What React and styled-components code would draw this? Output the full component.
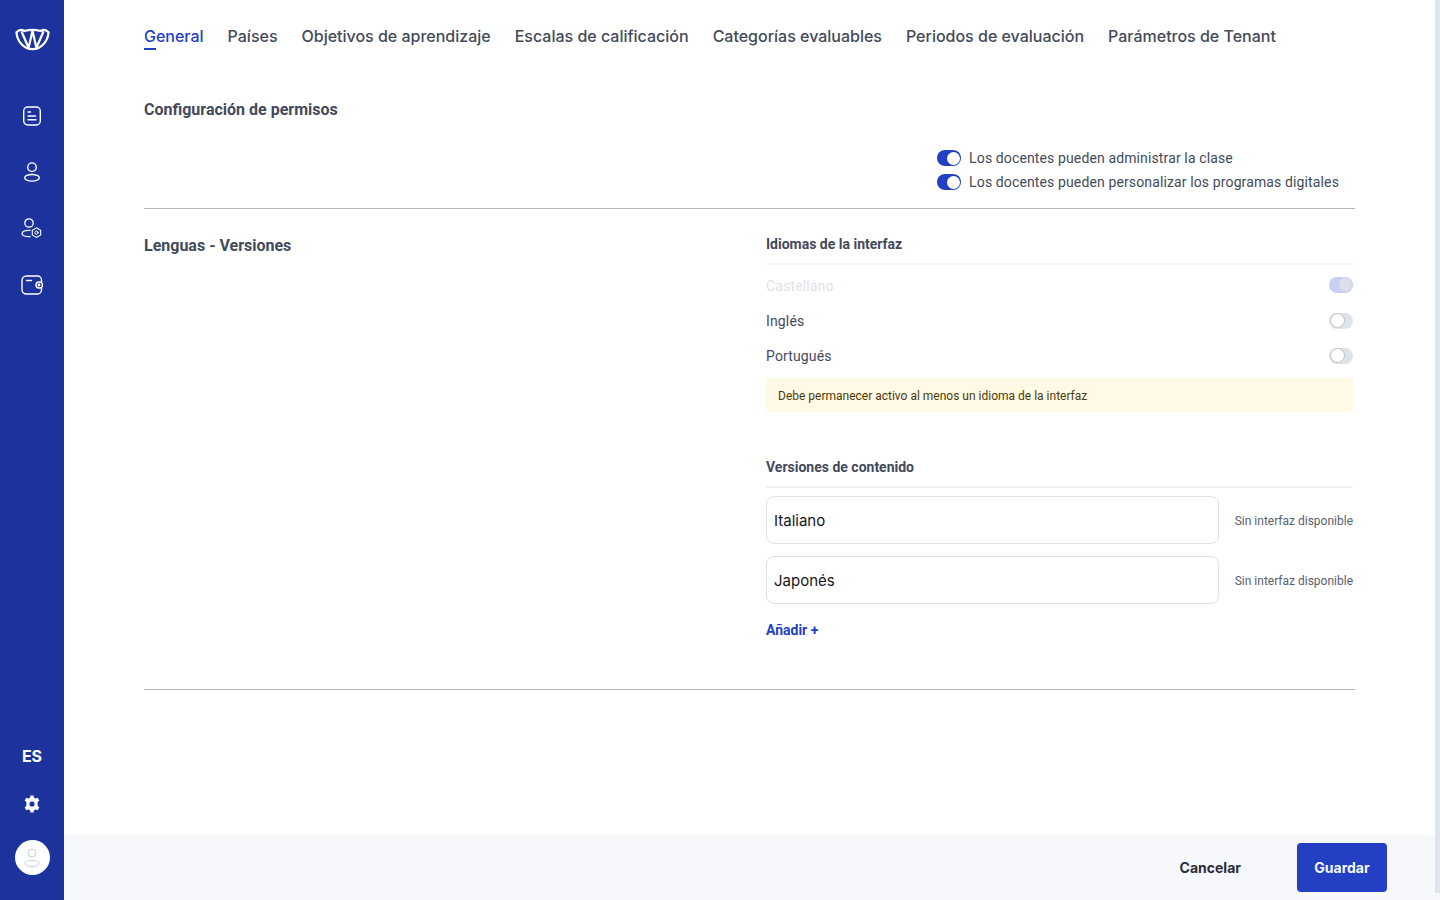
import React from "react";
import styled, { createGlobalStyle } from "styled-components";

const GlobalStyle = createGlobalStyle`
  html, body {
    margin: 0;
    height: 100%;
    overflow: hidden;
    background: #fff;
  }
  * {
    box-sizing: border-box;
  }
`;

const Page = styled.div`
  display: flex;
  width: 1440px;
  height: 900px;
`;

const Sidebar = styled.aside`
  width: 64px;
  height: 900px;
  flex-shrink: 0;
  background: #1c329c;
  display: flex;
  flex-direction: column;
  align-items: center;
  color: #fff;
`;

const LogoSlot = styled.div`
  height: 38px;
  margin-top: 20px;
  margin-bottom: 30px;
  padding-left: 1px;
  display: flex;
  align-items: center;
`;

const NavSlot = styled.div`
  height: 56.2px;
  display: flex;
  align-items: center;
  justify-content: center;
`;

const SidebarBottom = styled.div`
  margin-top: auto;
  padding-bottom: 25px;
  display: flex;
  flex-direction: column;
  align-items: center;
`;

const Lang = styled.div`
  font: 700 16px "Inter", sans-serif;
  line-height: 20px;
  margin-bottom: 29px;
`;

const Avatar = styled.div`
  width: 35px;
  height: 35px;
  margin-top: 27px;
  border-radius: 50%;
  background: #fff;
  display: flex;
  align-items: center;
  justify-content: center;
`;

const Main = styled.main`
  flex: 1;
  height: 900px;
  display: flex;
  flex-direction: column;
  position: relative;
`;

const Scrollbar = styled.div`
  position: absolute;
  top: 0;
  right: 0;
  width: 5px;
  height: 893px;
  background: #dfe5ef;
`;

const Content = styled.div`
  flex: 1;
  padding: 0 85px 0 80px;
`;

const Tabs = styled.nav`
  display: flex;
  gap: 24px;
  height: 73px;
  padding-top: 26px;
`;

const Tab = styled.a`
  font: 500 16px/20px "Inter", sans-serif;
  letter-spacing: -0.005px;
  color: ${props => (props.$active ? "#2340c5" : "#434a5b")};
  position: relative;
  white-space: nowrap;

  &::after {
    content: "";
    display: ${props => (props.$active ? "block" : "none")};
    position: absolute;
    left: 0;
    top: 22px;
    width: 12px;
    height: 2px;
    background: #2340c5;
  }
`;

const SectionTitle = styled.h2`
  margin: 0;
  font: 700 16px/20px "Roboto", sans-serif;
  color: #434a5b;
`;

const PermissionSection = styled.section`
  height: 136px;
  padding-top: 27px;
  border-bottom: 1px solid #b4b6bb;
  display: flex;
  flex-direction: column;
`;

const PermissionList = styled.div`
  margin-top: 28px;
  margin-left: auto;
  margin-right: 16px;
  display: flex;
  flex-direction: column;
  gap: 4px;
`;

const PermissionRow = styled.label`
  display: flex;
  align-items: center;
  gap: 8px;
  height: 20px;
  font: 400 14px/20px "Roboto", sans-serif;
  letter-spacing: 0.125px;
  color: #434a5b;
`;

const Toggle = styled.span`
  display: block;
  position: relative;
  width: 24px;
  height: 16px;
  border-radius: 8px;
  flex-shrink: 0;
  margin-top: ${props => (props.$disabled ? "-2px" : "0")};
  background: ${props => {
    if (props.$disabled) return "#c9cff2";
    return props.$on ? "#2340c5" : "#dfe3ea";
  }};

  &::after {
    content: "";
    position: absolute;
    top: 1.5px;
    left: ${props => (props.$on ? "9.5px" : "1.5px")};
    width: 13px;
    height: 13px;
    border-radius: 50%;
    background: ${props => (props.$disabled ? "#dde0ec" : "#fff")};
    box-shadow: ${props => (props.$on ? "none" : "0 0 0 1px #c5c8d2")};
  }
`;

const LanguageSection = styled.section`
  height: 481px;
  border-bottom: 1px solid #b4b6bb;
  display: flex;
  justify-content: space-between;
  padding-top: 27px;
`;

const Panel = styled.div`
  width: 587px;
  margin-right: 2px;
  margin-top: -2px;
`;

const PanelTitle = styled.h3`
  margin: 0;
  height: 31px;
  font: 700 14px/20px "Roboto", sans-serif;
  color: #434a5b;
  border-bottom: 2px solid #f1f3f8;
`;

const LanguageList = styled.div`
  padding-top: 3px;
`;

const LanguageRow = styled.div`
  height: 35px;
  display: flex;
  align-items: center;
  justify-content: space-between;
  font: 400 14px/20px "Roboto", sans-serif;
  letter-spacing: 0.15px;
  color: ${props => (props.$disabled ? "#dfe2e8" : "#434a5b")};
`;

const Notice = styled.div`
  height: 34px;
  margin-top: 5px;
  padding: 2px 12px 0;
  display: flex;
  align-items: center;
  background: #fff9e6;
  color: #4d3c08;
  font: 400 12px/16px "Roboto", sans-serif;
`;

const VersionsBlock = styled.div`
  margin-top: 45px;
`;

const VersionList = styled.div`
  margin-top: 8px;
  display: flex;
  flex-direction: column;
  gap: 12px;
`;

const VersionRow = styled.div`
  display: flex;
  align-items: center;
  justify-content: space-between;
`;

const VersionInput = styled.div`
  width: 453px;
  height: 48px;
  padding: 2px 7px 0;
  display: flex;
  align-items: center;
  border: 1px solid #dfe2e8;
  border-radius: 8px;
  font: 400 15px/20px "Inter", sans-serif;
  color: #14161c;
`;

const Hint = styled.span`
  padding-top: 2px;
  font: 400 12px/16px "Roboto", sans-serif;
  color: #5a6070;
`;

const AddLink = styled.a`
  display: block;
  margin-top: 18px;
  font: 700 14px/16px "Roboto", sans-serif;
  color: #2340c5;
`;

const Footer = styled.footer`
  height: 65px;
  background: #f7f8fc;
  display: flex;
  align-items: center;
  justify-content: flex-end;
  gap: 56px;
  padding: 0 53px 0 0;
`;

const CancelButton = styled.button`
  border: none;
  background: none;
  padding: 0;
  font: 700 14px/20px "Inter", sans-serif;
  color: #2b2e38;
`;

const SaveButton = styled.button`
  width: 90px;
  height: 49px;
  border: none;
  border-radius: 4px;
  background: #2340c5;
  color: #f4f6ff;
  font: 700 14px/20px "Inter", sans-serif;
`;

const LogoIcon = () => (
  <svg width="35" height="24" viewBox="0 0 36 24" fill="none" stroke="#fff" strokeWidth="2.300" strokeLinejoin="round" strokeLinecap="round">
    <path d="M1.500 5C4 2.500 7 2 9.500 3.800C14 2.600 22 2.600 26.500 3.800C29 2 32 2.500 34.500 5C34 14 27 22.500 18 22.500C9 22.500 2 14 1.500 5Z" />
    <path d="M7 5L14 21L18 3.500L22 21L29 5" />
  </svg>
);

const NoteIcon = () => (
  <svg width="20" height="20" viewBox="0 0 20 20" fill="none" stroke="#fff" strokeWidth="1.400" strokeLinecap="round">
    <rect x="1.700" y="1" width="16.600" height="18" rx="4" />
    <path d="M6 6H8.500M6 10H13.500M6 13.800H14" />
  </svg>
);

const UserIcon = () => (
  <svg width="18" height="20" viewBox="0 0 18 20" fill="none" stroke="#fff" strokeWidth="1.400">
    <circle cx="9" cy="5.200" r="4.300" />
    <ellipse cx="9" cy="15.800" rx="7.300" ry="3.300" />
  </svg>
);

const UserCogIcon = () => (
  <svg width="22" height="20" viewBox="0 0 22 20" fill="none" stroke="#fff" strokeWidth="1.300" strokeLinecap="round">
    <circle cx="8" cy="5" r="4.200" />
    <path d="M9 12.400C4.500 12 1 13.300 1 15.600C1 17.800 4.500 18.800 9 18.600" />
    <path d="M15.500 9.800L19.700 12.200V17L15.500 19.400L11.300 17V12.200Z" strokeWidth="1.100" />
    <circle cx="15.500" cy="14.600" r="1.600" strokeWidth="1" />
  </svg>
);

const WalletIcon = () => (
  <svg width="22" height="20" viewBox="0 0 22 20" fill="none" stroke="#fff" strokeWidth="1.400" strokeLinecap="round">
    <path d="M20.500 7V5C20.500 2.800 18.700 1 16.500 1H5.500C3 1 1 3 1 5.500V14.500C1 17 3 19 5.500 19H16.500C18.700 19 20.500 17.200 20.500 15V13" />
    <path d="M5.500 5.500H10.500" />
    <rect x="15" y="7" width="6.500" height="6" rx="3" />
    <circle cx="18" cy="10" r="0.700" />
  </svg>
);

const GearIcon = () => (
  <svg width="18" height="18" viewBox="0 0 16 16">
    <path
      fill="#fff"
      fillRule="evenodd"
      d="M6.600 0.500H9.400L9.800 2.500L11.200 3.200L13.100 2.400L14.500 4.800L13 6.200V9.800L14.500 11.200L13.100 13.600L11.200 12.800L9.800 13.500L9.400 15.500H6.600L6.200 13.500L4.800 12.800L2.900 13.600L1.500 11.200L3 9.800V6.200L1.500 4.800L2.900 2.400L4.800 3.200L6.200 2.500ZM8 5.700A2.300 2.300 0 1 0 8 10.300A2.300 2.300 0 1 0 8 5.700Z"
    />
  </svg>
);

const AvatarIcon = () => (
  <svg width="16" height="20" viewBox="0 0 16 20" fill="none" stroke="#b5bec9" strokeWidth="0.700">
    <circle cx="8" cy="5" r="4" />
    <ellipse cx="8" cy="15.500" rx="7" ry="3.200" />
  </svg>
);

const tabs = [
  "General",
  "Países",
  "Objetivos de aprendizaje",
  "Escalas de calificación",
  "Categorías evaluables",
  "Periodos de evaluación",
  "Parámetros de Tenant",
];

const App = () => (
  <Page>
    <GlobalStyle />
    <Sidebar>
      <LogoSlot>
        <LogoIcon />
      </LogoSlot>
      <NavSlot><NoteIcon /></NavSlot>
      <NavSlot><UserIcon /></NavSlot>
      <NavSlot><UserCogIcon /></NavSlot>
      <NavSlot><WalletIcon /></NavSlot>
      <SidebarBottom>
        <Lang>ES</Lang>
        <GearIcon />
        <Avatar><AvatarIcon /></Avatar>
      </SidebarBottom>
    </Sidebar>
    <Main>
      <Scrollbar />
      <Content>
        <Tabs>
          {tabs.map((tab, i) => (
            <Tab key={tab} $active={i === 0}>{tab}</Tab>
          ))}
        </Tabs>
        <PermissionSection>
          <SectionTitle>Configuración de permisos</SectionTitle>
          <PermissionList>
            <PermissionRow>
              <Toggle $on />
              Los docentes pueden administrar la clase
            </PermissionRow>
            <PermissionRow>
              <Toggle $on />
              Los docentes pueden personalizar los programas digitales
            </PermissionRow>
          </PermissionList>
        </PermissionSection>
        <LanguageSection>
          <SectionTitle>Lenguas - Versiones</SectionTitle>
          <Panel>
            <PanelTitle>Idiomas de la interfaz</PanelTitle>
            <LanguageList>
              <LanguageRow $disabled>
                Castellano
                <Toggle $on $disabled />
              </LanguageRow>
              <LanguageRow>
                Inglés
                <Toggle />
              </LanguageRow>
              <LanguageRow>
                Portugués
                <Toggle />
              </LanguageRow>
            </LanguageList>
            <Notice>Debe permanecer activo al menos un idioma de la interfaz</Notice>
            <VersionsBlock>
              <PanelTitle>Versiones de contenido</PanelTitle>
              <VersionList>
                <VersionRow>
                  <VersionInput>Italiano</VersionInput>
                  <Hint>Sin interfaz disponible</Hint>
                </VersionRow>
                <VersionRow>
                  <VersionInput>Japonés</VersionInput>
                  <Hint>Sin interfaz disponible</Hint>
                </VersionRow>
              </VersionList>
              <AddLink>Añadir +</AddLink>
            </VersionsBlock>
          </Panel>
        </LanguageSection>
      </Content>
      <Footer>
        <CancelButton>Cancelar</CancelButton>
        <SaveButton>Guardar</SaveButton>
      </Footer>
    </Main>
  </Page>
);

export default App;
